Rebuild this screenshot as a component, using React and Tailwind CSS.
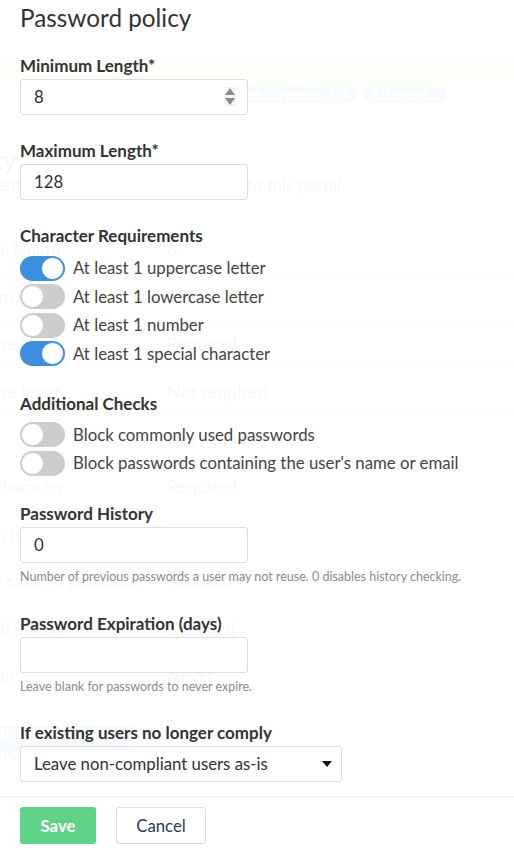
import { useState } from 'react'

const font = { fontFamily: 'Lato, "Open Sans", sans-serif' }

const Toggle = ({ on, label, onClick }) => (
  <button type="button" onClick={onClick} className="flex items-center gap-2 h-[28.5px] text-left">
    <span className={`relative inline-block w-[45px] h-[25px] rounded-full shrink-0 ${on ? 'bg-[#3b8fde]' : 'bg-[#cccccc]'}`}>
      <span className={`absolute top-[1px] w-[23px] h-[23px] rounded-full bg-white border ${on ? 'left-[21px] border-[#3b8fde]' : 'left-[1px] border-[#cccccc]'}`}></span>
    </span>
    <span className="text-[16.8px] leading-5 text-[#444]">{label}</span>
  </button>
)

const Label = ({ children }) => (
  <div className="text-[17px] font-bold text-[#333] leading-5 mb-[3px] whitespace-nowrap">{children}</div>
)

const Box = ({ children, className = '' }) => (
  <div className={`relative h-[36px] border border-[#dddddd] rounded-[3px] bg-white flex items-center pl-[13px] text-[16.8px] text-[#333] ${className}`}>
    {children}
  </div>
)

const rows = [
  ['Minimum length', '8'],
  ['Maximum length', '128'],
  ['Uppercase letter', 'Required'],
  ['Lowercase letter', 'Not required'],
  ['Number', 'Not required'],
  ['Special character', 'Required'],
  ['Common passwords', 'Blocked'],
  ['Name or email in password', 'Allowed'],
  ['Password history', 'Disabled'],
  ['Expiration', 'Never'],
]

// faded page behind the modal
const Ghost = () => (
  <div className="absolute inset-0 text-[#333] overflow-hidden">
    <div className="h-[58px]"></div>
    <div className="h-[31px] bg-[#fde9b0] border-b border-[#d9d9d9]"></div>
    <div className="flex gap-[6px] pl-[203px] -mt-[4px]">
      <span className="flex h-[18px] rounded-full bg-[#3b8fde] text-white text-[15px] leading-[18px] font-bold">
        <span className="pl-4 pr-3">Waste Streams</span>
        <span className="px-2 border-l border-white">×</span>
      </span>
      <span className="h-[18px] px-[9px] rounded-full bg-[#3b8fde] text-white text-[15px] leading-[18px] font-bold">10 more...</span>
    </div>
    <div className="mt-[42px] -ml-[78px] text-[26px] leading-[30px] font-bold whitespace-nowrap">Security</div>
    <div className="w-[345px] flex justify-end text-[16.8px] leading-5 whitespace-nowrap">
      <span>Password requirements for everyone who will sign in to this portal.</span>
    </div>
    <div className="mt-[31px] flex flex-col">
      {rows.map(([a, b]) => (
        <div key={a} className="flex h-[47.4px] items-center text-[16.8px] whitespace-nowrap border-b border-[#cccccc]">
          <span className="w-[229px] shrink-0 -ml-[62px] font-bold text-[#666]">{a}</span>
          <span className="text-[18px]">{b}</span>
        </div>
      ))}
    </div>
    <div className="mt-[26px] w-[133px] h-[35px] bg-[#3b8fde] text-white flex items-center justify-end pr-4 text-[16.8px] font-bold">password policy</div>
  </div>
)

export default function App() {
  const [reqs, setReqs] = useState({ upper: true, lower: false, number: false, special: true })
  const [checks, setChecks] = useState({ common: false, name: false })

  return (
    <div className="relative w-[514px] h-[864px] overflow-hidden bg-white" style={font}>
      <Ghost />
      <div className="absolute inset-0 bg-white/96"></div>
      <div className="relative px-5">
        <h1 className="pt-[3px] text-[24.3px] text-[#333] leading-[30px]">Password policy</h1>

        <div className="mt-[23px]">
          <Label>Minimum Length*</Label>
          <Box className="w-[228px]">
            8
            <span className="absolute right-[11px] top-[7px] flex flex-col items-center gap-[3px] bg-[#f4f4f4] px-[1px] py-[1px]">
              <span className="w-0 h-0 border-l-[5px] border-r-[5px] border-b-[7px] border-l-transparent border-r-transparent border-b-[#8a8a8a]"></span>
              <span className="w-0 h-0 border-l-[5px] border-r-[5px] border-t-[7px] border-l-transparent border-r-transparent border-t-[#8a8a8a]"></span>
            </span>
          </Box>
        </div>

        <div className="mt-[26px]">
          <Label>Maximum Length*</Label>
          <Box className="w-[228px]">128</Box>
        </div>

        <div className="mt-[26px]">
          <Label>Character Requirements</Label>
          <div className="flex flex-col mt-[7.75px]">
            <Toggle on={reqs.upper} label="At least 1 uppercase letter" onClick={() => setReqs({ ...reqs, upper: !reqs.upper })} />
            <Toggle on={reqs.lower} label="At least 1 lowercase letter" onClick={() => setReqs({ ...reqs, lower: !reqs.lower })} />
            <Toggle on={reqs.number} label="At least 1 number" onClick={() => setReqs({ ...reqs, number: !reqs.number })} />
            <Toggle on={reqs.special} label="At least 1 special character" onClick={() => setReqs({ ...reqs, special: !reqs.special })} />
          </div>
        </div>

        <div className="mt-[26px]">
          <Label>Additional Checks</Label>
          <div className="flex flex-col mt-[6.75px]">
            <Toggle on={checks.common} label="Block commonly used passwords" onClick={() => setChecks({ ...checks, common: !checks.common })} />
            <Toggle on={checks.name} label="Block passwords containing the user's name or email" onClick={() => setChecks({ ...checks, name: !checks.name })} />
          </div>
        </div>

        <div className="mt-[26.25px]">
          <Label>Password History</Label>
          <Box className="w-[228px]">0</Box>
          <p className="mt-[6px] text-[12.5px] text-[#8b8b8b] leading-4 whitespace-nowrap">Number of previous passwords a user may not reuse. 0 disables history checking.</p>
        </div>

        <div className="mt-[29px]">
          <Label>Password Expiration (days)</Label>
          <Box className="w-[228px]"></Box>
          <p className="mt-[6px] text-[12.5px] text-[#8b8b8b] leading-4">Leave blank for passwords to never expire.</p>
        </div>

        <div className="mt-[28px]">
          <Label>If existing users no longer comply</Label>
          <Box className="w-[322px] justify-between pr-[9px]">
            <span>Leave non-compliant users as-is</span>
            <span className="w-0 h-0 border-l-[5px] border-r-[5px] border-t-[6px] border-l-transparent border-r-transparent border-t-[#111]"></span>
          </Box>
        </div>
      </div>

      <div className="relative mt-[14px] border-t border-[#f2f2f2]"></div>
      <div className="relative px-5 pt-[10px] flex gap-[20px]">
        <button className="w-[76px] h-[37px] rounded-[3px] bg-[#5fd386] text-white font-bold text-[16.8px]">Save</button>
        <button className="w-[90px] h-[37px] rounded-[3px] bg-white border border-[#dddddd] text-[#2a3c5a] text-[16.8px]">Cancel</button>
      </div>
    </div>
  )
}
